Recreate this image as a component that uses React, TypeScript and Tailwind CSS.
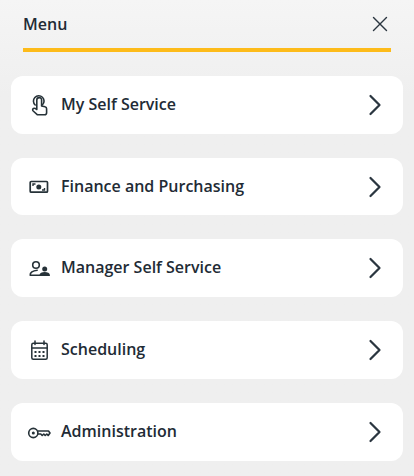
import React from 'react'
import { ChevronRight, X } from 'lucide-react'

const iconColor = '#263238'

const HandIcon = () => (
  <svg width="24" height="24" viewBox="0 0 24 24" fill="none" stroke={iconColor} strokeWidth="1.6" strokeLinecap="round" strokeLinejoin="round">
    <path d="M8.200 12a5.300 5.300 0 1 1 7.300-.2" />
    <path d="M9.800 16.500V7a2.400 2.400 0 0 1 4.800 0v6l3.500.8c1 .2 1.500 1 1.500 2v4c0 1.100-.9 2-2 2H10.500L6.200 18c-.9-1-.6-2 .2-2.500.8-.4 1.800-.2 3.400 1" />
  </svg>
)

const MoneyIcon = () => (
  <svg width="24" height="24" viewBox="0 0 24 24" fill="none" stroke={iconColor} strokeWidth="1.700">
    <rect x="3.200" y="6.500" width="17.300" height="10.700" rx="1" />
    <circle cx="11.800" cy="12" r="2.500" fill={iconColor} stroke="none" />
    <path d="M6 11V9h2.500M17.500 13v2H15" strokeWidth="1.400" />
  </svg>
)

const PeopleIcon = () => (
  <svg width="24" height="24" viewBox="0 0 24 24" fill="none" stroke={iconColor} strokeWidth="1.600" strokeLinecap="round">
    <circle cx="9" cy="9" r="3.300" />
    <path d="M3.200 19.200c-.3-2.500 2.500-4.500 7-5M3.200 19.200H13" />
    <circle cx="17.700" cy="13" r="2.500" fill={iconColor} stroke="none" />
    <path d="M12.500 20v-1c0-2 2.500-3 5.200-3s5.200 1 5.200 3v1z" fill={iconColor} stroke="none" />
  </svg>
)

const CalendarIcon = () => (
  <svg width="24" height="24" viewBox="0 0 24 24" fill="none" stroke={iconColor} strokeWidth="1.500" strokeLinecap="round">
    <rect x="4.800" y="5.200" width="15.400" height="16" rx="1.500" />
    <path d="M4.800 10h15.400M8 3v3.500M17 3v3.500" />
    <path d="M7.500 14h2M11.500 14h2M15.500 14h2M7.500 18h2M11.500 18h2M15.500 18h2" strokeWidth="1.800" strokeLinecap="butt" />
  </svg>
)

const KeyIcon = () => (
  <svg width="24" height="24" viewBox="0 0 24 24" fill="none" stroke={iconColor} strokeWidth="1.600" strokeLinejoin="round">
    <circle cx="6.300" cy="13" r="4.600" />
    <circle cx="6.300" cy="13" r="1.500" fill={iconColor} stroke="none" />
    <path d="M10.800 11H21.500L23 13l-1.800 2.500-1.400-1.500-1.600 1.500-1.400-1.500-1.600 1.500-1.400-1.500h-3.500" />
  </svg>
)

const items = [
  { label: 'My Self Service', icon: <HandIcon /> },
  { label: 'Finance and Purchasing', icon: <MoneyIcon /> },
  { label: 'Manager Self Service', icon: <PeopleIcon /> },
  { label: 'Scheduling', icon: <CalendarIcon /> },
  { label: 'Administration', icon: <KeyIcon /> },
]

const App = () => {
  return (
    <div className="h-[476px] overflow-hidden bg-linear-to-b from-[#f5f5f5] to-[#efefef] to-[20%] px-[11px] font-['Open_Sans',sans-serif] text-[#222b35]">
      <div className="mx-3 flex h-[52px] items-center justify-between border-b-4 border-[#fdbb1a]">
        <span className="text-base font-semibold">Menu</span>
        <button className="-mr-[1.500px] text-[#2b3640]">
          <X size={26} strokeWidth={1.300} />
        </button>
      </div>
      <div className="mt-6 flex flex-col gap-[24.15px]">
        {items.map((item) => (
          <div key={item.label} className="flex h-[57.6px] items-center rounded-xl bg-white pl-4 pr-[10px]">
            <span className="flex w-[34px] justify-start">{item.icon}</span>
            <span className="flex-1 pb-[2px] text-base font-semibold">{item.label}</span>
            <ChevronRight size={36} strokeWidth={1.500} className="text-[#2b3640]" />
          </div>
        ))}
      </div>
    </div>
  )
}

export default App
